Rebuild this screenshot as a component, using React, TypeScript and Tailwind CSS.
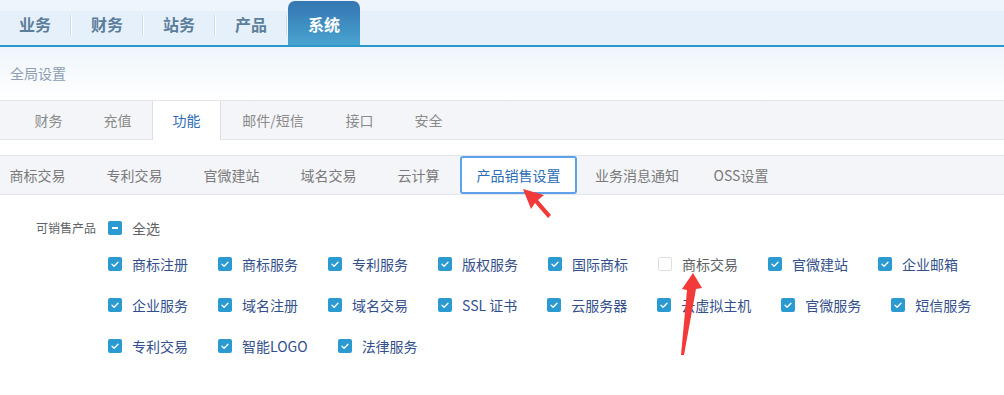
import React from "react";

const topTabs = ["业务", "财务", "站务", "产品"];

const subTabs: { t: string; w: string; active?: boolean }[] = [
  { t: "财务", w: "w-[69px]" },
  { t: "充值", w: "w-[69px]" },
  { t: "功能", w: "w-[69px]", active: true },
  { t: "邮件/短信", w: "w-[104px]" },
  { t: "接口", w: "w-[69px]" },
  { t: "安全", w: "w-[69px]" },
];

const thirdTabs: { t: string; w: string; active?: boolean }[] = [
  { t: "商标交易", w: "w-[97px]" },
  { t: "专利交易", w: "w-[97px]" },
  { t: "官微建站", w: "w-[97px]" },
  { t: "域名交易", w: "w-[97px]" },
  { t: "云计算", w: "w-[83px]" },
  { t: "产品销售设置", w: "w-[117px]", active: true },
  { t: "业务消息通知", w: "w-[120px]" },
  { t: "OSS设置", w: "w-[88px]" },
];

const products: { t: string; c: boolean }[] = [
  { t: "商标注册", c: true },
  { t: "商标服务", c: true },
  { t: "专利服务", c: true },
  { t: "版权服务", c: true },
  { t: "国际商标", c: true },
  { t: "商标交易", c: false },
  { t: "官微建站", c: true },
  { t: "企业邮箱", c: true },
  { t: "企业服务", c: true },
  { t: "域名注册", c: true },
  { t: "域名交易", c: true },
  { t: "SSL 证书", c: true },
  { t: "云服务器", c: true },
  { t: "云虚拟主机", c: true },
  { t: "官微服务", c: true },
  { t: "短信服务", c: true },
  { t: "专利交易", c: true },
  { t: "智能LOGO", c: true },
  { t: "法律服务", c: true },
];

function Box({ checked, minus }: { checked?: boolean; minus?: boolean }) {
  if (minus) {
    return (
      <span className="flex h-[14px] w-[14px] shrink-0 items-center justify-center rounded-[2px] bg-[#2a9ad0]">
        <span className="h-[2px] w-[6px] bg-white" />
      </span>
    );
  }
  if (!checked) {
    return (
      <span className="h-[14px] w-[14px] shrink-0 rounded-[2px] border border-[#dcdfe6] bg-white" />
    );
  }
  return (
    <span className="flex h-[14px] w-[14px] shrink-0 items-center justify-center rounded-[2px] bg-[#2a9ad0]">
      <svg width="14" height="14" viewBox="0 0 14 14">
        <polyline
          points="4,7.2 6.1,9.2 10,5.2"
          fill="none"
          stroke="white"
          strokeWidth="1.3"
          strokeLinecap="round"
          strokeLinejoin="round"
        />
      </svg>
    </span>
  );
}

export default function App() {
  return (
    <div className="relative h-[395px] w-[1004px] overflow-hidden bg-white [font-family:'Noto_Sans_CJK_SC','Microsoft_YaHei',sans-serif]">
      {/* top bar */}
      <div className="flex h-[47px] border-b-2 border-[#2b98c8] bg-[linear-gradient(to_bottom,#eef5fd_11px,#e6f0fa_11px)]">
        {topTabs.map((t) => (
          <React.Fragment key={t}>
            <div className="flex w-[70px] items-center justify-center pt-[3px] text-[16px] font-bold text-[#5a7e9c]">
              {t}
            </div>
            <div className="mt-[15px] h-[20px] w-0 border-l border-r border-l-[#cddae6] border-r-white" />
          </React.Fragment>
        ))}
        <div className="mt-[1px] flex w-[72px] items-center justify-center rounded-t-[7px] bg-linear-to-b from-[#3476b1] to-[#49a3d0] pt-[2px] text-[16px] font-bold text-white">
          系统
        </div>
      </div>

      {/* breadcrumb */}
      <div className="flex h-[53px] items-center bg-linear-to-b from-[#eef5fb] to-white px-[10px] text-[14px] text-[#8d9db4]">
        全局设置
      </div>

      {/* second tabs */}
      <div className="flex h-[40px] border-y border-[#e2e5ec] bg-[#f4f5f9] pl-[14px]">
        {subTabs.map((s) =>
          s.active ? (
            <div
              key={s.t}
              className={`${s.w} -mb-px flex items-center justify-center border-x border-[#dcdfe6] bg-white text-[14px] text-[#2d6db5]`}
            >
              {s.t}
            </div>
          ) : (
            <div
              key={s.t}
              className={`${s.w} flex items-center justify-center text-[14px] text-[#8a8a8a]`}
            >
              {s.t}
            </div>
          )
        )}
      </div>

      {/* third tabs */}
      <div className="mt-[15px] flex h-[40px] border-y border-[#e2e5ec] bg-[#f4f5f9]">
        <div className="-ml-[11px] flex">
          {thirdTabs.map((s) =>
            s.active ? (
              <div
                key={s.t}
                className={`${s.w} flex items-center justify-center rounded-[3px] border-2 border-[#5da1e8] bg-white text-[14px] text-[#2d6db5]`}
              >
                {s.t}
              </div>
            ) : (
              <div
                key={s.t}
                className={`${s.w} flex items-center justify-center text-[14px] text-[#7a7a7a]`}
              >
                {s.t}
              </div>
            )
          )}
        </div>
      </div>

      {/* products */}
      <div className="flex pt-[23px]">
        <div className="h-5 w-[96px] text-right text-[12px] leading-5 text-[#606266]">
          可销售产品
        </div>
        <div className="ml-3 flex-1">
          <div className="flex h-5 items-center gap-[10px]">
            <Box minus />
            <span className="text-[14px] text-[#606266]">全选</span>
          </div>
          <div className="mt-4 flex flex-wrap gap-x-[30px] gap-y-[21px]">
            {products.map((p, i) => (
              <div key={i} className="flex h-5 items-center gap-[10px]">
                <Box checked={p.c} />
                <span
                  className={`whitespace-nowrap text-[14px] ${
                    p.c ? "text-[#34508a]" : "text-[#606266]"
                  }`}
                >
                  {p.t}
                </span>
              </div>
            ))}
          </div>
        </div>
      </div>

      {/* red arrows (annotations) */}
      <svg
        className="pointer-events-none absolute left-0 top-0"
        width="1004"
        height="395"
        viewBox="0 0 1004 395"
      >
        <polygon
          points="523,189 544,195 538,200 551,215 548,218 535,203 531,209"
          fill="#f23a3a"
        />
        <polygon
          points="693,273 702,288 696,289 684,355 681,355 687,290 682,289"
          fill="#f23a3a"
        />
      </svg>
    </div>
  );
}
